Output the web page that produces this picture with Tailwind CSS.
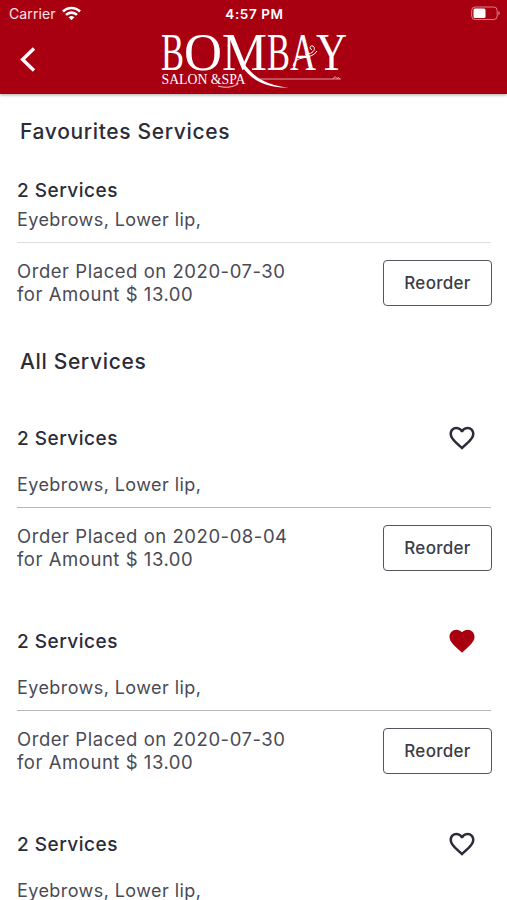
<!DOCTYPE html>
<html lang="en">
<head>
    <meta charset="UTF-8">
    <meta name="viewport" content="width=device-width, initial-scale=1.0">
    <title>Bombay Salon &amp; Spa</title>
    <script src="https://cdn.jsdelivr.net/npm/@tailwindcss/browser@4"></script>
</head>
<body class="h-[900px] overflow-hidden bg-white font-['Inter',sans-serif] text-[#4a4a55]">
    <header class="relative h-[94px] bg-[#a90011] text-white shadow-[0_1px_3px_rgba(0,0,0,0.35)]">
        <div class="grid h-[27px] grid-cols-3 items-center pl-[9px] pr-[6px] text-[14px]">
            <div class="flex items-center gap-[6px] tracking-[0.1px] text-white/90">
                <span>Carrier</span>
                <svg class="-mt-px h-[15px] w-[19px]" viewBox="0 0 19 15" fill="none" stroke="white" stroke-width="2.6">
                    <path d="M1 5.500a12 12 0 0 1 17 0M4 8.900a7.800 7.800 0 0 1 11 0"/>
                    <path d="M9.500 14.200L6.600 11.300a4.200 4.200 0 0 1 5.800 0z" fill="white" stroke="none"/>
                </svg>
            </div>
            <div class="pt-px pr-px text-center text-[13.500px] font-semibold tracking-[0.600px]">4:57 PM</div>
            <svg class="h-[15px] w-[30px] justify-self-end" viewBox="0 0 30 15">
                <rect x="0.700" y="1" width="25.500" height="12.500" rx="3.500" fill="none" stroke="white" stroke-opacity="0.5"/>
                <rect x="2.500" y="2.500" width="12" height="9.500" rx="1.500" fill="white"/>
                <path d="M27.500 5q2.500 2.200 0 4.400z" fill="white" fill-opacity="0.6"/>
            </svg>
        </div>
        <div class="flex h-[67px] items-start pl-[20px]">
            <svg class="mt-[20px] h-[25px] w-[16px]" viewBox="0 0 16 25" fill="none" stroke="white" stroke-width="3.4">
                <path d="M14 1.500L2.600 12.500L14 23.500"/>
            </svg>
            <svg class="-mt-[7px] ml-[124px] h-[74px] w-[190px] overflow-visible" viewBox="160 20 190 74" fill="white" font-family="Liberation Serif, serif">
                <g font-size="52">
                    <text x="161" y="69.500" textLength="23" lengthAdjust="spacingAndGlyphs">B</text>
                    <text x="184" y="69.500" textLength="38" lengthAdjust="spacingAndGlyphs">O</text>
                    <text x="222" y="69.500" textLength="45" lengthAdjust="spacingAndGlyphs">M</text>
                    <text x="267" y="69.500" textLength="23" lengthAdjust="spacingAndGlyphs">B</text>
                    <text x="290" y="69.500" textLength="26" lengthAdjust="spacingAndGlyphs">A</text>
                    <text x="316" y="69.500" textLength="31" lengthAdjust="spacingAndGlyphs">Y</text>
                </g>
                <text x="161.500" y="84" font-size="14" textLength="84" lengthAdjust="spacingAndGlyphs">SALON &amp;SPA</text>
                <!-- swash under the M -->
                <path d="M241 65C251 80 265 88 289 87.500C268 86 255 78 245 65z"/>
                <path d="M218 86C226 88.500 233 87 238 84" fill="none" stroke="white" stroke-width="0.800"/>
                <!-- vine across the A -->
                <path d="M293 66C295 54 311 61 317 51M305 54C312 55 317 49 313 46C309.500 45 309 49.500 312 49.500" fill="none" stroke="white" stroke-width="1"/>
                <path d="M260 79H341M333 79l2-2.500 2 2 1.500-1 1 1.500" fill="none" stroke="white" stroke-width="0.600"/>
            </svg>
        </div>
    </header>

    <main class="pl-[17px] pr-4">
        <h2 class="ml-[3px] mt-[26px] h-6 text-[21px] leading-6 font-medium tracking-[0.650px] text-[#2c2c38]">Favourites Services</h2>
        <section class="mt-[35px]">
            <h3 class="h-6 text-[19px] leading-6 font-medium tracking-[0.500px] text-[#2c2c38]">2 Services</h3>
            <p class="mt-[5px] h-6 text-[18px] leading-6 tracking-[0.420px]">Eyebrows, Lower lip,</p>
            <div class="mt-[10px] flex h-[64px] items-end justify-between border-t border-[#dedede]">
                <p class="text-[18.500px] leading-[23px] tracking-[0.540px]">Order Placed on 2020-07-30<br>for Amount $ 13.00</p>
                <button class="-mr-px h-[46px] w-[109px] rounded border-[1.500px] border-[#55555f] pt-0.5 text-[17px] font-medium tracking-[0.300px] text-[#3c3c48]">Reorder</button>
            </div>
        </section>

        <h2 class="ml-[3px] mt-[44px] h-6 text-[21px] leading-6 font-medium tracking-[0.650px] text-[#2c2c38]">All Services</h2>
        <section class="mt-[53px]">
            <div class="flex h-6 items-center justify-between">
                <h3 class="text-[19px] leading-6 font-medium tracking-[0.500px] text-[#2c2c38]">2 Services</h3>
                <svg class="-mt-[3px] mr-[14.500px] size-[30px]" viewBox="0 0 24 24" fill="#2c2c38"><path d="M16.500 3c-1.740 0-3.410.810-4.500 2.090C10.910 3.810 9.240 3 7.500 3 4.420 3 2 5.420 2 8.500c0 3.780 3.400 6.860 8.550 11.540L12 21.350l1.450-1.320C18.600 15.360 22 12.280 22 8.500 22 5.420 19.580 3 16.500 3zm-4.400 15.550l-.100.100-.100-.100C7.140 14.240 4 11.390 4 8.500 4 6.500 5.500 5 7.500 5c1.540 0 3.040.990 3.570 2.360h1.870C13.460 5.990 14.960 5 16.500 5c2 0 3.500 1.500 3.500 3.500 0 2.890-3.140 5.740-7.900 10.050z"/></svg>
            </div>
            <p class="mt-[22px] h-6 text-[18px] leading-6 tracking-[0.420px]">Eyebrows, Lower lip,</p>
            <div class="mt-[10px] flex h-[64px] items-end justify-between border-t border-[#b8b8b8]">
                <p class="text-[18.500px] leading-[23px] tracking-[0.540px]">Order Placed on 2020-08-04<br>for Amount $ 13.00</p>
                <button class="-mr-px h-[46px] w-[109px] rounded border-[1.500px] border-[#55555f] pt-0.5 text-[17px] font-medium tracking-[0.300px] text-[#3c3c48]">Reorder</button>
            </div>
        </section>
        <section class="mt-[59px]">
            <div class="flex h-6 items-center justify-between">
                <h3 class="text-[19px] leading-6 font-medium tracking-[0.500px] text-[#2c2c38]">2 Services</h3>
                <svg class="-mt-[3px] mr-[14.500px] size-[30px]" viewBox="0 0 24 24" fill="#a90011"><path d="M12 21.350l-1.450-1.320C5.400 15.360 2 12.280 2 8.500 2 5.420 4.420 3 7.500 3c1.740 0 3.410.810 4.500 2.090C13.090 3.810 14.760 3 16.500 3 19.580 3 22 5.420 22 8.500c0 3.780-3.400 6.860-8.550 11.540L12 21.350z"/></svg>
            </div>
            <p class="mt-[22px] h-6 text-[18px] leading-6 tracking-[0.420px]">Eyebrows, Lower lip,</p>
            <div class="mt-[10px] flex h-[64px] items-end justify-between border-t border-[#b8b8b8]">
                <p class="text-[18.500px] leading-[23px] tracking-[0.540px]">Order Placed on 2020-07-30<br>for Amount $ 13.00</p>
                <button class="-mr-px h-[46px] w-[109px] rounded border-[1.500px] border-[#55555f] pt-0.5 text-[17px] font-medium tracking-[0.300px] text-[#3c3c48]">Reorder</button>
            </div>
        </section>
        <section class="mt-[59px]">
            <div class="flex h-6 items-center justify-between">
                <h3 class="text-[19px] leading-6 font-medium tracking-[0.500px] text-[#2c2c38]">2 Services</h3>
                <svg class="-mt-[3px] mr-[14.500px] size-[30px]" viewBox="0 0 24 24" fill="#2c2c38"><path d="M16.500 3c-1.740 0-3.410.810-4.500 2.090C10.910 3.810 9.240 3 7.500 3 4.420 3 2 5.420 2 8.500c0 3.780 3.400 6.860 8.550 11.540L12 21.350l1.450-1.320C18.600 15.360 22 12.280 22 8.500 22 5.420 19.580 3 16.500 3zm-4.400 15.550l-.100.100-.100-.100C7.140 14.240 4 11.390 4 8.500 4 6.500 5.500 5 7.500 5c1.540 0 3.040.990 3.570 2.360h1.870C13.460 5.990 14.960 5 16.500 5c2 0 3.500 1.500 3.500 3.500 0 2.890-3.140 5.740-7.900 10.050z"/></svg>
            </div>
            <p class="mt-[22px] h-6 text-[18px] leading-6 tracking-[0.420px]">Eyebrows, Lower lip,</p>
        </section>
    </main>
</body>
</html>
